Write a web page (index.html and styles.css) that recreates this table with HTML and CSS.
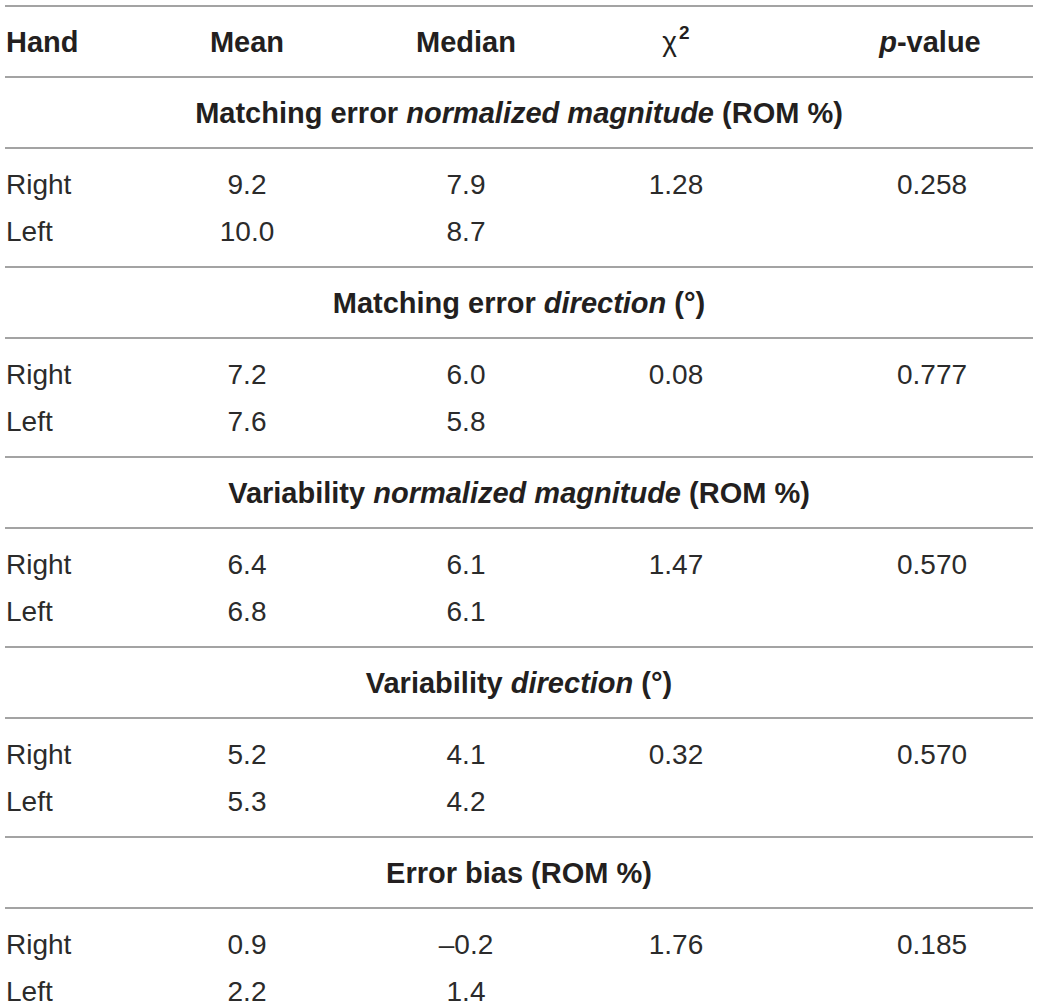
FILE: index.html
```html
<!DOCTYPE html>
<html>
	<head>
		<meta charset="utf-8">
		<title>Hand comparison</title>
		<link rel="stylesheet" href="styles.css">
	</head>
	<body>
		<table class="stats">
			<colgroup>
				<col class="c-hand">
				<col class="c-mean">
				<col class="c-median">
				<col class="c-chi">
				<col class="c-p">
			</colgroup>
			<thead>
				<tr>
					<th class="hand">Hand</th>
					<th>Mean</th>
					<th>Median</th>
					<th class="chi">&chi;<sup>2</sup></th>
					<th class="pval"><i>p</i>-value</th>
				</tr>
			</thead>
			<tbody>
				<tr class="title"><td colspan="5">Matching error <i>normalized magnitude</i> (ROM %)</td></tr>
				<tr class="first"><td class="hand">Right</td><td>9.2</td><td>7.9</td><td>1.28</td><td class="pval">0.258</td></tr>
				<tr class="last"><td class="hand">Left</td><td>10.0</td><td>8.7</td><td></td><td class="pval"></td></tr>

				<tr class="title"><td colspan="5">Matching error <i>direction</i> (°)</td></tr>
				<tr class="first"><td class="hand">Right</td><td>7.2</td><td>6.0</td><td>0.08</td><td class="pval">0.777</td></tr>
				<tr class="last"><td class="hand">Left</td><td>7.6</td><td>5.8</td><td></td><td class="pval"></td></tr>

				<tr class="title"><td colspan="5">Variability <i>normalized magnitude</i> (ROM %)</td></tr>
				<tr class="first"><td class="hand">Right</td><td>6.4</td><td>6.1</td><td>1.47</td><td class="pval">0.570</td></tr>
				<tr class="last"><td class="hand">Left</td><td>6.8</td><td>6.1</td><td></td><td class="pval"></td></tr>

				<tr class="title"><td colspan="5">Variability <i>direction</i> (°)</td></tr>
				<tr class="first"><td class="hand">Right</td><td>5.2</td><td>4.1</td><td>0.32</td><td class="pval">0.570</td></tr>
				<tr class="last"><td class="hand">Left</td><td>5.3</td><td>4.2</td><td></td><td class="pval"></td></tr>

				<tr class="title"><td colspan="5">Error bias (ROM %)</td></tr>
				<tr class="first"><td class="hand">Right</td><td>0.9</td><td>&ndash;0.2</td><td>1.76</td><td class="pval">0.185</td></tr>
				<tr class="last"><td class="hand">Left</td><td>2.2</td><td>1.4</td><td></td><td class="pval"></td></tr>
			</tbody>
		</table>
	</body>
</html>
```
FILE: styles.css
```css
*{
	margin: 0;
	padding: 0;
}
body{
	background-color: #fff;
	font-family: "Liberation Sans", Arial, sans-serif;
	color: #231f20;
	overflow: hidden;
}
.stats{
	width: 1028px;
	margin: 5px 0 0 5px;
	border-collapse: collapse;
	table-layout: fixed;
}
.c-hand{ width: 132px; }
.c-mean{ width: 220px; }
.c-median{ width: 218px; }
.c-chi{ width: 202px; }
.c-p{ width: 256px; }

th, td{
	text-align: center;
	vertical-align: middle;
	padding: 0;
}
.stats .hand{
	text-align: left;
	padding-left: 1px;
}
.stats .pval{
	padding-left: 54px;
}
.stats th.pval{
	padding-left: 50px;
}

/* 表头 */
thead tr{
	border-top: 2px solid #a3a3a3;
	border-bottom: 2px solid #a3a3a3;
}
th{
	height: 69px;
	font-size: 29px;
	font-weight: bold;
	line-height: 30px;
}
th.chi{
	font-weight: normal;
	font-size: 28px;
}
th.chi sup{
	font-weight: bold;
	font-size: 19px;
	vertical-align: 12px;
	line-height: 0;
	margin-left: 2px;
}

/* 分组标题 */
.title td{
	height: 69px;
	font-size: 29px;
	font-weight: bold;
	line-height: 30px;
	border-bottom: 2px solid #a3a3a3;
}

/* 数据行 */
.first td, .last td{
	font-size: 28px;
	line-height: 47px;
	color: #2b2b2b;
}
.first td{
	padding-top: 12px;
}
.last td{
	padding-bottom: 11px;
}
.last{
	border-bottom: 2px solid #a3a3a3;
}
```
